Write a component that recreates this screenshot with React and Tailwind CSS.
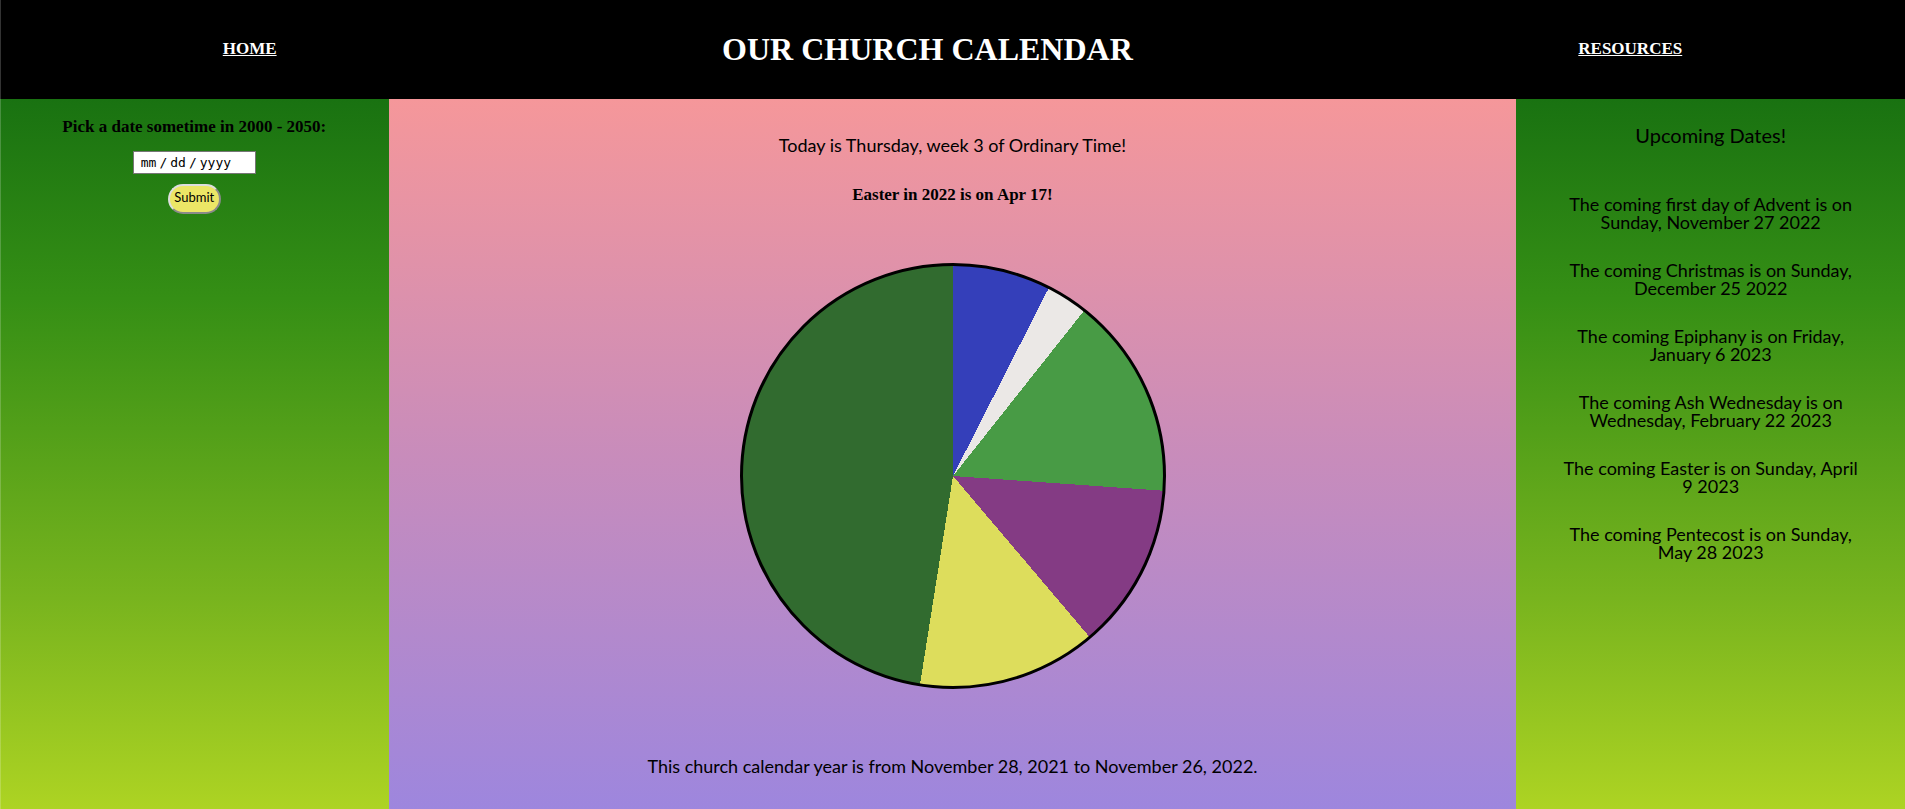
const upcoming = [
  "The coming first day of Advent is on Sunday, November 27 2022",
  "The coming Christmas is on Sunday, December 25 2022",
  "The coming Epiphany is on Friday, January 6 2023",
  "The coming Ash Wednesday is on Wednesday, February 22 2023",
  "The coming Easter is on Sunday, April 9 2023",
  "The coming Pentecost is on Sunday, May 28 2023",
];

function Header() {
  return (
    <header className="flex h-[99px] items-center justify-around bg-black pb-[2px] font-['Luminari','Liberation_Serif',serif] font-bold text-white">
      <a href="#home" className="text-[17px] underline">HOME</a>
      <h1 className="text-[32px] leading-10">OUR CHURCH CALENDAR</h1>
      <a href="#resources" className="text-[17px] underline">RESOURCES</a>
    </header>
  );
}

function DatePicker() {
  return (
    <form className="flex flex-col items-center bg-[linear-gradient(#197211,#358f15_28%,#78b41e_70%,#aed423)] px-4 pt-4">
      <label htmlFor="date" className="font-['Luminari','Liberation_Serif',serif] text-[17px] leading-6 font-bold">
        Pick a date sometime in 2000 - 2050:
      </label>
      <input
        id="date"
        type="date"
        min="2000-01-01"
        max="2050-12-31"
        className="mt-3 h-[23px] w-[123px] border border-[#767676] bg-white pl-[6px] font-['DejaVu_Sans_Mono',monospace] text-[13px] text-black [&::-webkit-calendar-picker-indicator]:hidden [&::-webkit-datetime-edit-text]:px-[2px]"
      />
      <button
        type="button"
        className="mt-[10px] h-[30px] w-[53px] rounded-full border-2 border-t-[#dedede] border-l-[#dedede] border-r-[#8a8a8a] border-b-[#8a8a8a] bg-[#ece666] pb-1 font-['Papyrus','Lato',fantasy] text-[13px] leading-5 text-black"
      >
        Submit
      </button>
    </form>
  );
}

function CalendarYear() {
  return (
    <main className="flex flex-col items-center bg-linear-to-b/srgb from-[#f5979a] via-[#c88cbb] to-[#9d86de] px-4 pt-8 pb-8 text-center">
      <p className="font-['Papyrus','Lato',fantasy] text-[18px] leading-7">
        Today is Thursday, week 3 of Ordinary Time!
      </p>
      <h2 className="mt-[22px] font-['Luminari','Liberation_Serif',serif] text-[17px] leading-7 font-bold">
        Easter in 2022 is on Apr 17!
      </h2>
      <div
        role="img"
        aria-label="Seasons of the church year"
        className="mt-[54px] size-[426px] rounded-full border-3 border-black bg-[conic-gradient(#343fba_0_27deg,#ebe8e6_27deg_38.4deg,#489b45_38.4deg_94deg,#843b84_94deg_139.7deg,#dddd5c_139.7deg_189deg,#316b2f_189deg)]"
      />
      <p className="mt-[63px] font-['Papyrus','Lato',fantasy] text-[18px] leading-7">
        This church calendar year is from November 28, 2021 to November 26, 2022.
      </p>
    </main>
  );
}

function UpcomingDates() {
  return (
    <aside className="bg-[linear-gradient(#197211,#358f15_28%,#78b41e_70%,#aed423)] px-10 pt-6 text-center font-['Papyrus','Lato',fantasy]">
      <h2 className="text-[20px] leading-6">Upcoming Dates!</h2>
      <ul className="mt-12 flex flex-col gap-[30px] text-[18px] leading-[18px]">
        {upcoming.map((text) => (
          <li key={text}>{text}</li>
        ))}
      </ul>
    </aside>
  );
}

export default function App() {
  return (
    <div className="relative flex min-h-screen flex-col text-black">
      <Header />
      <div className="grid flex-1 grid-cols-[20.4%_1fr_20.4%]">
        <DatePicker />
        <CalendarYear />
        <UpcomingDates />
      </div>
      <div className="absolute inset-y-0 left-0 w-px bg-white/20" />
    </div>
  );
}
